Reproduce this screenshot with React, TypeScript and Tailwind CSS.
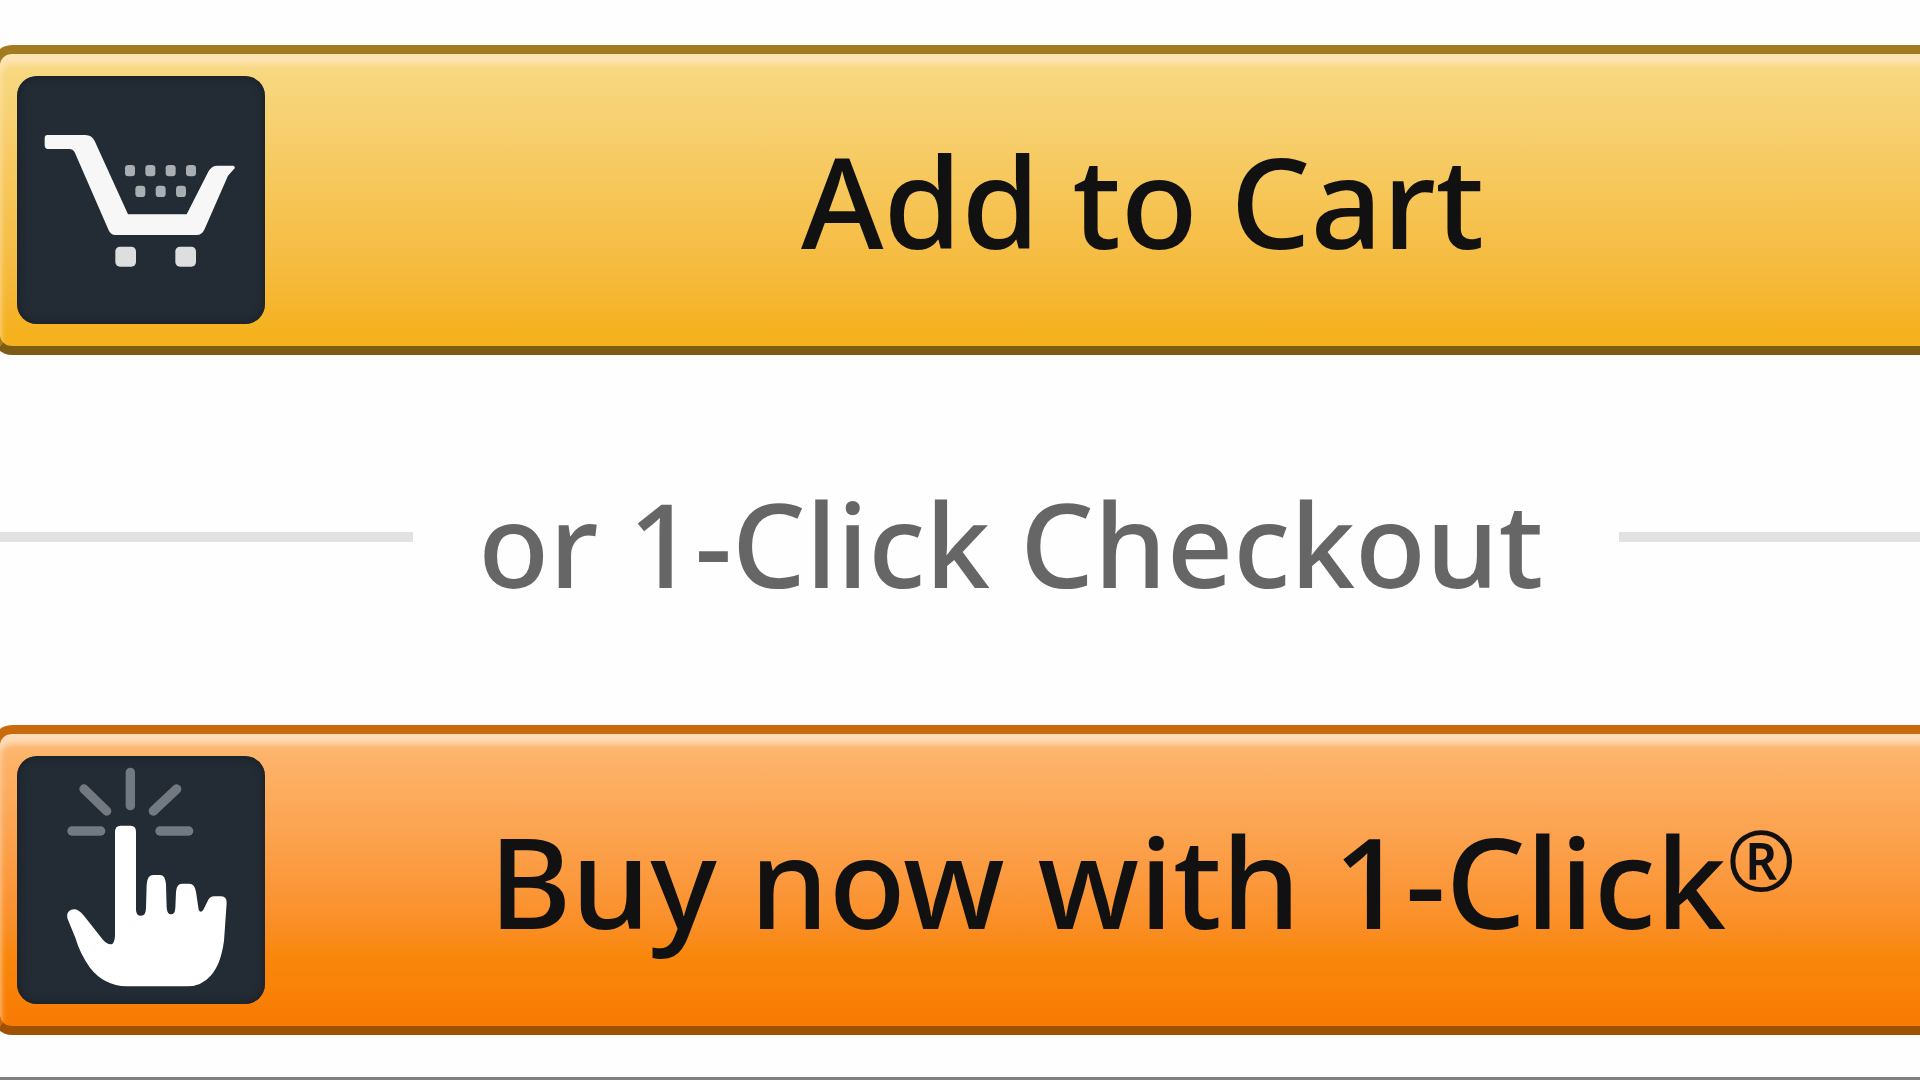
import type { ReactNode } from "react";

function CartIcon() {
  return (
    <svg viewBox="51 135 744 744" className="size-full" aria-hidden="true">
      <path
        d="M142 312H256Q276 312 284 330L384 550H560L626 420Q636 404 652 404H700Q708 408 702 414L684 434L614 594Q606 612 590 612H346Q332 612 326 598L224 364Q218 354 208 354H142Q134 352 134 342V322Q134 312 142 312Z"
        fill="#f7f7f7"
      />
      <g fill="#a9aeb3">
        {[390, 451, 512, 573].map((x) => (
          <rect key={x} x={x - 15} y="402" width="30" height="34" rx="10" />
        ))}
        {[421, 482, 543].map((x) => (
          <rect key={x} x={x - 15} y="464" width="30" height="34" rx="10" />
        ))}
      </g>
      <g fill="#dcdedf">
        <rect x="346" y="647" width="62" height="60" rx="14" />
        <rect x="526" y="647" width="62" height="60" rx="14" />
      </g>
    </svg>
  );
}

function ClickIcon() {
  return (
    <svg viewBox="51 135 744 744" className="size-full" aria-hidden="true">
      <g stroke="#737980" strokeWidth="28" strokeLinecap="round" fill="none">
        <path d="M391 184V284" />
        <path d="M252 234L320 300" />
        <path d="M530 234L460 300" />
        <path d="M216 360H302" />
        <path d="M480 360H566" />
      </g>
      <path
        d="M345 362Q345 344 362 344H392Q408 344 408 362V596Q408 614 423 614Q438 614 438 590L440 520Q442 492 460 492H480Q496 492 498 520L500 590Q502 610 513 610Q525 610 526 590L528 542Q530 518 546 518H568Q584 518 588 542L596 596Q602 608 610 596L622 572Q628 556 644 556H664Q680 556 680 576L672 690Q662 762 632 794Q604 826 562 826H380Q312 824 270 770Q240 728 226 680L202 622Q198 602 214 596Q232 590 250 612L310 688Q326 704 338 698Q345 690 345 670Z"
        fill="#fff"
      />
    </svg>
  );
}

function BuyButton({
  icon,
  className,
  children,
}: {
  icon: ReactNode;
  className: string;
  children: ReactNode;
}) {
  return (
    <button
      type="button"
      className={`-mr-4 -ml-2 flex items-center rounded-l-[20px] border-y-[9px] border-l-8 py-[22px] pr-4 pl-[17px] text-[#111] ${className}`}
    >
      <span className="size-[248px] shrink-0 overflow-hidden rounded-[20px] bg-[#232b34] shadow-[inset_0_0_8px_#171c20]">
        {icon}
      </span>
      <span className="flex-1 pl-[100px] text-center whitespace-nowrap">
        {children}
      </span>
    </button>
  );
}

export default function App() {
  return (
    <main className="flex flex-col overflow-hidden border-b-[3px] border-[#808080] bg-[#fefefe] pt-[45px] pb-[42px] font-['Noto_Sans',sans-serif] text-[126px] leading-none font-medium">
      <BuyButton
        icon={<CartIcon />}
        className="border-t-[#a47a20] border-b-[#7f5c16] border-l-[#a47a20] bg-linear-to-b from-[#f8da86] via-[#f6c75a] via-45% to-[#f5b11e] to-95% shadow-[inset_0_10px_6px_#fde4b4]"
      >
        Add to Cart
      </BuyButton>

      <div className="flex items-center pt-[118px] pb-[124px]">
        <hr className="w-[21.5%] border-t-[10px] border-[#e2e2e2]" />
        <span className="flex-1 pt-[12px] pr-[10px] text-center text-[116px] whitespace-nowrap text-[#666]">
          or 1-Click Checkout
        </span>
        <hr className="w-[15.7%] border-t-[10px] border-[#e2e2e2]" />
      </div>

      <BuyButton
        icon={<ClickIcon />}
        className="border-t-[#c96a0c] border-b-[#a05204] border-l-[#c96a0c] bg-linear-to-b from-[#fdb871] via-[#f9880c] via-75% to-[#f97a04] shadow-[inset_0_10px_6px_#fddcb8]"
      >
        Buy now with 1-Click
        <span className="align-[38px] text-[84px] leading-0">®</span>
      </BuyButton>
    </main>
  );
}
